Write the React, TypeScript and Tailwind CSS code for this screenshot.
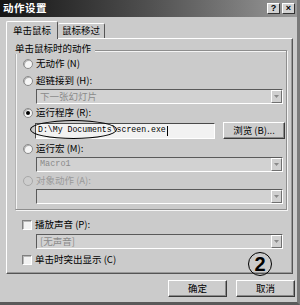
import React from "react";

const Radio = ({ checked = false, disabled = false }: { checked?: boolean; disabled?: boolean }) => (
  <span
    className={
      disabled
        ? "w-[10px] h-[10px] rounded-full border border-[#a8a8a8] bg-[#cdcdcd] flex items-center justify-center shrink-0"
        : "w-[10px] h-[10px] rounded-full border border-[#8a8a8a] bg-[#f6f6f6] shadow-[inset_1px_1px_0_#b0b0b0] flex items-center justify-center shrink-0"
    }
  >
    {checked && <span className="w-[4px] h-[4px] rounded-full bg-black" />}
  </span>
);

const Check = () => (
  <span className="w-[10px] h-[10px] border border-t-[#808080] border-l-[#808080] border-r-white border-b-white bg-[#f2f2f2] shadow-[inset_1px_1px_0_#b8b8b8] shrink-0" />
);

const Arrow = () => (
  <span className="w-[11px] h-full bg-[#d0d0d0] border border-t-white border-l-white border-r-[#707070] border-b-[#707070] flex items-center justify-center shrink-0">
    <svg width="5" height="3" viewBox="0 0 5 3">
      <path d="M0 0H5L2.5 3Z" fill="#8a8a8a" />
    </svg>
  </span>
);

const Drop = ({ text, mono = false }: { text: string; mono?: boolean }) => (
  <div className="flex h-[15px] w-[247px] border border-t-[#5a5a5a] border-l-[#5a5a5a] border-r-white border-b-white bg-[#d2d2d2] items-center">
    <span
      className={
        mono
          ? "flex-1 pl-[3px] text-[#8a8a8a] text-[8.5px] leading-none font-['Liberation_Mono',monospace]"
          : "flex-1 pl-[3px] text-[#8a8a8a] text-[9.5px] leading-none"
      }
    >
      {text}
    </span>
    <Arrow />
  </div>
);

const Row = ({ children }: { children: React.ReactNode }) => (
  <div className="flex items-center h-[12px] gap-[3px] leading-none whitespace-pre">{children}</div>
);

const Btn = ({ children, w }: { children: React.ReactNode; w: string }) => (
  <div
    className={`${w} h-[17px] bg-[#cdcdcd] border border-t-white border-l-white border-r-[#3a3a3a] border-b-[#3a3a3a] shadow-[inset_-1px_-1px_0_#8a8a8a] flex items-center justify-center leading-none whitespace-pre`}
  >
    {children}
  </div>
);

export default function App() {
  return (
    <div className="w-[300px] h-[305px] bg-[#cbcbcb] relative overflow-hidden font-['Noto_Sans_CJK_SC',sans-serif] text-[9.5px] text-black border-r-[3px] border-b-[3px] border-r-[#7a7a7a] border-b-[#5a5a5a]">
      {/* Title bar */}
      <div className="h-[17px] bg-gradient-to-r from-[#151515] via-[#505050] to-[#9a9a9a] flex items-center justify-between pl-[3px] pr-[2px]">
        <span className="text-white font-bold text-[10.5px] leading-none tracking-[0.5px]">动作设置</span>
        <div className="flex gap-[2px]">
          <div className="w-[13px] h-[11px] bg-[#d2d2d2] border border-t-white border-l-white border-r-[#333] border-b-[#333] flex items-center justify-center text-[9px] font-bold leading-none font-['Liberation_Sans',sans-serif]">?</div>
          <div className="w-[13px] h-[11px] bg-[#d2d2d2] border border-t-white border-l-white border-r-[#333] border-b-[#333] flex items-center justify-center text-[9px] font-bold leading-none font-['Liberation_Sans',sans-serif]">×</div>
        </div>
      </div>

      <div className="pl-[6px] pt-[4px]">
        {/* Tabs */}
        <div className="flex items-end h-[17px] relative z-10">
          <div className="w-[52px] h-[18px] -mb-px bg-[#cbcbcb] border border-b-0 border-t-white border-l-white border-r-[#555] rounded-t-[2px] flex items-center justify-center leading-none">
            单击鼠标
          </div>
          <div className="w-[47px] h-[15px] bg-[#cbcbcb] border border-b-0 border-t-white border-l-0 border-r-[#555] rounded-t-[2px] flex items-center justify-center leading-none">
            鼠标移过
          </div>
        </div>

        {/* Panel */}
        <div className="w-[287px] h-[236px] border border-t-white border-l-white border-r-[#555] border-b-[#555] shadow-[inset_-1px_-1px_0_#999] pl-[8px] pt-[11px] relative">
          {/* Group box */}
          <div className="relative w-[272px] h-[160px] border border-[#8e8e8e] border-l-[#b4b4b4] shadow-[1px_1px_0_#f4f4f4,inset_1px_1px_0_#f4f4f4] pl-[7px] pt-[7px] flex flex-col">
            <span className="absolute -top-[7px] left-[-1px] bg-[#cbcbcb] pr-[4px] leading-none text-[9.5px]">单击鼠标时的动作</span>
            <Row>
              <Radio />
              <span>无动作 (N)</span>
            </Row>
            <div className="mt-[5px]">
              <Row>
                <Radio />
                <span>超链接到 (H):</span>
              </Row>
            </div>
            <div className="mt-[2px] ml-[13px]">
              <Drop text="下一张幻灯片" />
            </div>
            <div className="mt-[3px]">
              <Row>
                <Radio checked />
                <span>运行程序 (R):</span>
              </Row>
            </div>
            <div className="mt-[3px] ml-[12px] flex items-center gap-[8px]">
              <div className="w-[180px] h-[16px] border border-t-[#4a4a4a] border-l-[#4a4a4a] border-r-white border-b-white bg-[#f2f2f2] flex items-center pl-[2px]">
                <span className="font-['Liberation_Mono',monospace] text-[8.2px] leading-none">D:\My Documents\screen.exe</span>
                <span className="w-[1px] h-[10px] bg-black ml-[1px]" />
              </div>
              <Btn w="w-[62px]">
                <span>浏览 (B)...</span>
              </Btn>
            </div>
            <div className="mt-[4px]">
              <Row>
                <Radio />
                <span>运行宏 (M):</span>
              </Row>
            </div>
            <div className="mt-[2px] ml-[13px]">
              <Drop text="Macro1" mono />
            </div>
            <div className="mt-[3px]">
              <Row>
                <Radio disabled />
                <span className="text-[#9a9a9a]">对象动作 (A):</span>
              </Row>
            </div>
            <div className="mt-[2px] ml-[13px]">
              <Drop text="" />
            </div>
          </div>

          {/* Below group */}
          <div className="mt-[9px] pl-[7px] flex flex-col">
            <Row>
              <Check />
              <span>播放声音 (P):</span>
            </Row>
            <div className="mt-[3px] ml-[14px]">
              <Drop text="[无声音]" />
            </div>
            <div className="mt-[5px]">
              <Row>
                <Check />
                <span>单击时突出显示 (C)</span>
              </Row>
            </div>
          </div>
        </div>

        {/* Footer buttons */}
        <div className="flex justify-end gap-[9px] mt-[6px] pr-[2px]">
          <Btn w="w-[59px]">确定</Btn>
          <Btn w="w-[59px]">取消</Btn>
        </div>
      </div>

      {/* Ellipse annotation */}
      <div className="absolute left-[30px] top-[120px] w-[87px] h-[19px] rounded-[50%] border border-black" />

      {/* Circled 2 */}
      <div className="absolute left-[248px] top-[252px] w-[24px] h-[24px] rounded-full border-[1.5px] border-black flex items-center justify-center font-['Liberation_Sans',sans-serif] font-bold text-[20px] leading-none">
        2
      </div>
    </div>
  );
}
